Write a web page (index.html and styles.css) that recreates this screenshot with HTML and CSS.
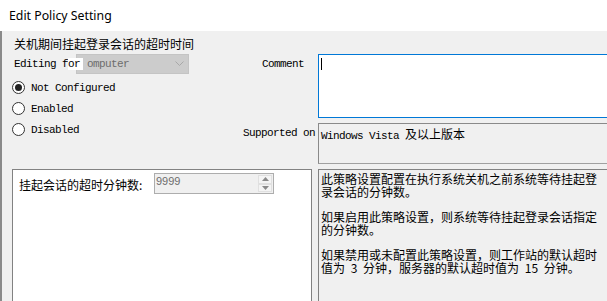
FILE: index.html
```html
<!DOCTYPE html>
<html>
<head>
<meta charset="utf-8">
<link rel="stylesheet" href="styles.css">
</head>
<body>
<div class="window">
  <div class="titlebar">Edit Policy Setting</div>
  <div class="client">
    <div class="top">
      <div class="leftcol">
        <div class="heading">关机期间挂起登录会话的超时时间</div>
        <div class="editing">
          <span class="edlabel">Editing f<span class="ovl">or</span></span>
          <div class="combo"><span class="combotext">omputer</span>
            <svg class="chev" width="9" height="6" viewBox="0 0 9 6"><path d="M0.5 0.5 L4.5 4.5 L8.5 0.5" fill="none" stroke="#a8a8a8" stroke-width="1"/></svg>
          </div>
        </div>
        <div class="radios">
          <div class="radio"><span class="circle checked"></span><span class="rlabel">Not Configured</span></div>
          <div class="radio"><span class="circle"></span><span class="rlabel">Enabled</span></div>
          <div class="radio"><span class="circle"></span><span class="rlabel">Disabled</span></div>
        </div>
      </div>
      <div class="rightcol">
        <div class="flabel comment-label">Comment</div>
        <div class="commentbox"><span class="caret"></span></div>
        <div class="flabel sup-label">Supported on</div>
        <div class="supbox"><span class="lat">Windows Vista </span>及以上版本</div>
      </div>
    </div>
    <div class="bottom">
      <div class="options">
        <div class="optrow">
          <span class="optlabel">挂起会话的超时分钟数:</span>
          <div class="spin">
            <span class="spinval">9999</span>
            <div class="spinbtns">
              <span class="sbtn"><svg width="7" height="4" viewBox="0 0 7 4"><path d="M0 4 L3.5 0 L7 4 Z" fill="#8a8a8a"/></svg></span>
              <span class="sbtn"><svg width="7" height="4" viewBox="0 0 7 4"><path d="M0 0 L3.5 4 L7 0 Z" fill="#8a8a8a"/></svg></span>
            </div>
          </div>
        </div>
      </div>
      <div class="help">
        <p>此策略设置配置在执行系统关机之前系统等待挂起登录会话的分钟数。</p>
        <p>如果启用此策略设置，则系统等待挂起登录会话指定的分钟数。</p>
        <p>如果禁用或未配置此策略设置，则工作站的默认超时值为 3 分钟，服务器的默认超时值为 15 分钟。</p>
      </div>
    </div>
  </div>
</div>
</body>
</html>
```

FILE: styles.css
```css
html, body {
  margin: 0;
  padding: 0;
}
body {
  width: 607px;
  height: 301px;
  overflow: hidden;
  background: #f0f0f0;
}
.window {
  width: 607px;
  height: 301px;
  overflow: hidden;
  display: flex;
  flex-direction: column;
}
.titlebar {
  height: 31px;
  flex: none;
  background: #ffffff;
  padding-left: 9px;
  font-family: "Noto Sans", "Liberation Sans", sans-serif;
  font-size: 12.3px;
  line-height: 31px;
  color: #000;
}
.client {
  flex: 1;
  background: #f0f0f0;
  border-left: 2px solid #8a8a8a;
  padding-left: 10px;
  font-family: "Liberation Mono", "Noto Sans CJK SC", monospace;
  font-size: 11px;
  letter-spacing: -0.6px;
  color: #000;
}
.top {
  display: flex;
}
.leftcol {
  width: 229px;
  flex: none;
}
.heading {
  margin-top: 6px;
  padding-left: 2px;
  height: 14px;
  font-family: "Noto Sans CJK SC", sans-serif;
  font-size: 12px;
  line-height: 14px;
  letter-spacing: 0;
}
.editing {
  margin-top: 3px;
  height: 20px;
  padding-left: 2px;
  display: flex;
  align-items: center;
}
.edlabel {
  position: relative;
  z-index: 1;
  margin-right: -7px;
  line-height: 20px;
  white-space: pre;
}
.ovl {
  background: #ffffff;
  padding-right: 3px;
}
.combo {
  width: 97px;
  height: 18px;
  background: #cccccc;
  border: 1px solid #c4c4c4;
  display: flex;
  align-items: center;
  justify-content: space-between;
  padding-left: 10px;
  padding-right: 4px;
  box-sizing: content-box;
}
.combotext {
  color: #6d6d6d;
}
.chev {
  display: block;
}
.radios {
  margin-top: 3px;
}
.radio {
  height: 21px;
  display: flex;
  align-items: center;
}
.circle {
  width: 11px;
  height: 11px;
  border: 1px solid #333333;
  border-radius: 50%;
  background: #ffffff;
  display: flex;
  align-items: center;
  justify-content: center;
  flex: none;
}
.circle.checked::after {
  content: "";
  width: 7px;
  height: 7px;
  border-radius: 50%;
  background: #222222;
}
.rlabel {
  margin-left: 6px;
}
.rightcol {
  flex: 1;
  margin-top: 23px;
  display: grid;
  grid-template-columns: 72px 300px;
  column-gap: 5px;
  row-gap: 5px;
  align-items: start;
}
.flabel {
  text-align: right;
  white-space: pre;
}
.comment-label {
  padding-top: 4px;
  padding-right: 9px;
}
.sup-label {
  padding-top: 4px;
  margin-right: -2px;
}
.commentbox {
  background: #ffffff;
  border: 1px solid #0078d7;
  padding: 3px 2px;
  box-sizing: border-box;
  height: 64px;
}
.caret {
  display: block;
  width: 1px;
  height: 12px;
  background: #000;
}
.supbox {
  height: 41px;
  box-sizing: border-box;
  border: 1px solid #a0a0a0;
  border-top-color: #8a8a8a;
  border-left-color: #8a8a8a;
  padding: 3px 2px;
  font-family: "Noto Sans CJK SC", sans-serif;
  font-size: 12px;
  letter-spacing: 0;
  line-height: 14px;
  white-space: pre;
}
.lat {
  font-family: "Liberation Mono", monospace;
  font-size: 11px;
  letter-spacing: -0.6px;
}
.bottom {
  margin-top: 5px;
  display: flex;
  column-gap: 6px;
}
.options {
  width: 300px;
  height: 140px;
  box-sizing: border-box;
  flex: none;
  background: #ffffff;
  border: 1px solid #828282;
  padding: 3px 6px;
}
.optrow {
  display: flex;
  align-items: center;
}
.optlabel {
  width: 135px;
  font-family: "Noto Sans CJK SC", sans-serif;
  font-size: 12px;
  letter-spacing: 0;
  line-height: 14px;
  padding-top: 2px;
}
.spin {
  width: 120px;
  height: 21px;
  box-sizing: border-box;
  background: #f0f0f0;
  border: 1px solid #adadad;
  display: flex;
  justify-content: space-between;
  padding-left: 1px;
}
.spinval {
  font-family: "Liberation Sans", sans-serif;
  font-size: 11px;
  letter-spacing: 0;
  color: #6d6d6d;
  line-height: 14px;
}
.spinbtns {
  width: 14px;
  display: flex;
  flex-direction: column;
  margin: 1px 1px 1px 0;
}
.sbtn {
  flex: 1;
  display: flex;
  align-items: center;
  justify-content: center;
  background: #f4f4f4;
  border: 1px solid #e0e0e0;
}
.sbtn svg {
  display: block;
}
.help {
  width: 300px;
  height: 140px;
  flex: none;
  box-sizing: border-box;
  border: 1px solid #828282;
  border-right: none;
  padding: 2px 2px;
  font-family: "Noto Sans CJK SC", sans-serif;
  font-size: 12px;
  line-height: 13px;
  letter-spacing: 0;
  word-spacing: 3px;
}
.help p {
  margin: 0 0 12px 0;
  width: 282px;
}
```
